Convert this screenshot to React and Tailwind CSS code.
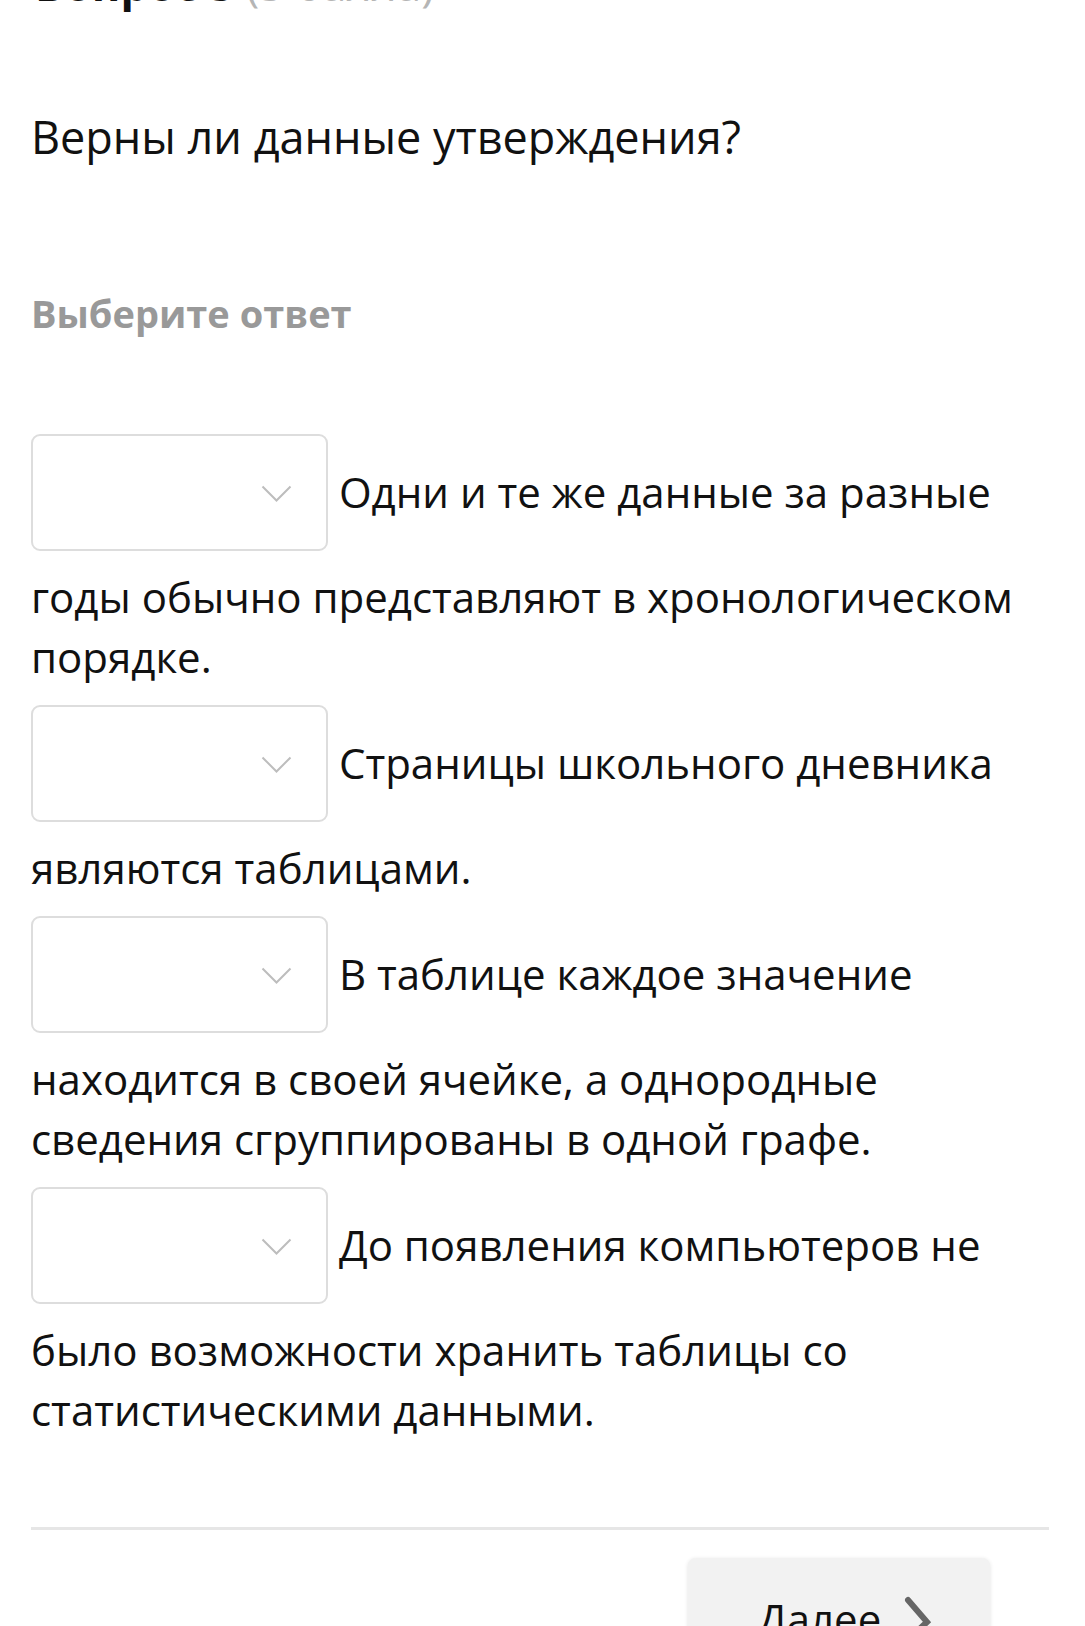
import React from 'react';

const statements = [
  'Одни и те же данные за разные годы обычно представляют в хронологическом порядке.',
  'Страницы школьного дневника являются таблицами.',
  'В таблице каждое значение находится в своей ячейке, а однородные сведения сгруппированы в одной графе.',
  'До появления компьютеров не было возможности хранить таблицы со статистическими данными.',
];

// empty dropdown that sits inline with the statement text
function AnswerSelect() {
  return (
    <span className="relative inline-block overflow-hidden align-[-59px] mt-[18px] mb-[16px] h-[117px] w-[297px] rounded-[9px] border-2 border-[#dddddd] bg-white">
      <svg
        className="absolute right-[34px] top-[49px]"
        width="31"
        height="18"
        viewBox="0 0 31 18"
        fill="none"
      >
        <path d="M1.5 1.5 L15.5 15.5 L29.5 1.5" stroke="#bdbdbd" strokeWidth="2" />
      </svg>
    </span>
  );
}

export default function App() {
  return (
    <div
      className="min-h-[1626px] overflow-hidden bg-white pl-[31px] pr-[36px] text-[#111111]"
      style={{ fontFamily: '"Open Sans", "Noto Sans", sans-serif' }}
    >
      {/* question header, scrolled mostly off screen */}
      <div className="mt-[-46px] text-[44px] leading-[60px] pl-[4px]">
        <span className="font-bold">Вопрос 5</span>{' '}
        <span className="text-[#b5b5b5]">(3 балла)</span>
      </div>

      <div className="mt-[93px] text-[45px] leading-[60px]">Верны ли данные утверждения?</div>

      <div className="mt-[121px] text-[38px] leading-[50px] font-bold text-[#999999]">
        Выберите ответ
      </div>

      <div className="mt-[78px] text-[42px] leading-[60px]">
        {statements.map((s, i) => (
          <div key={i}>
            <AnswerSelect /> {s}
          </div>
        ))}
      </div>

      <div className="mt-[87px] h-[3px] bg-[#e6e6e6]" />

      <div className="mt-[28px] flex justify-end pr-[59px]">
        <button className="flex h-[110px] w-[302px] items-start gap-[22px] rounded-[8px] bg-[#f2f2f2] pl-[70px] pt-[31px] text-[42px] leading-[60px] text-[#111111] shadow-[0_1px_4px_rgba(0,0,0,0.12)]">
          <span>Далее</span>
          <svg width="30" height="44" viewBox="0 0 30 44" fill="none" className="mt-[7px]">
            <path d="M5 4 L24 26 L5 44" stroke="#666666" strokeWidth="6" strokeLinecap="round" />
          </svg>
        </button>
      </div>
    </div>
  );
}
